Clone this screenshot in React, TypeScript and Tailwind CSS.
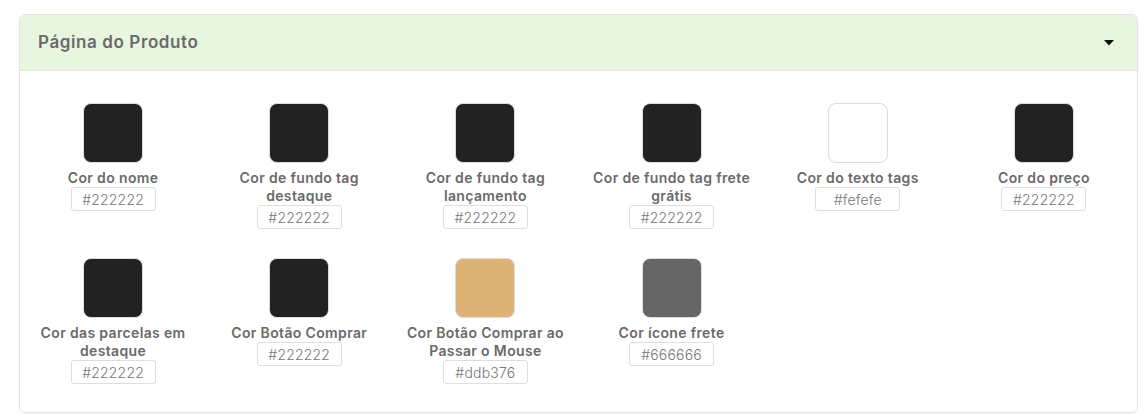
import { useState } from "react";

type ColorOption = {
  label: string;
  value: string;
};

const options: ColorOption[] = [
  { label: "Cor do nome", value: "#222222" },
  { label: "Cor de fundo tag destaque", value: "#222222" },
  { label: "Cor de fundo tag lançamento", value: "#222222" },
  { label: "Cor de fundo tag frete grátis", value: "#222222" },
  { label: "Cor do texto tags", value: "#fefefe" },
  { label: "Cor do preço", value: "#222222" },
  { label: "Cor das parcelas em destaque", value: "#222222" },
  { label: "Cor Botão Comprar", value: "#222222" },
  { label: "Cor Botão Comprar ao Passar o Mouse", value: "#ddb376" },
  { label: "Cor ícone frete", value: "#666666" },
];

function ColorField({ option }: { option: ColorOption }) {
  return (
    <div className="flex flex-col items-center px-[10px] text-center">
      {/* swatch colour comes from data */}
      <div
        className="h-[60px] w-[60px] rounded-[8px] border border-[#dcdcdc]"
        style={{ backgroundColor: option.value }}
      />
      <span className="mt-[6px] text-[14px] leading-[18px] font-semibold tracking-[0.35px] text-[#6a6a6a]">
        {option.label}
      </span>
      <div className="flex h-[24px] w-[85px] items-center justify-center rounded-[3px] border border-[#dedede] text-[14px] font-light tracking-[0.2px] text-[#777]">
        {option.value}
      </div>
    </div>
  );
}

export default function App() {
  const [open, setOpen] = useState(true);

  return (
    <div className="min-h-[420px] bg-white pt-[14px] pl-[19px]" style={{ fontFamily: "Inter, 'Open Sans', sans-serif" }}>
      <div className="w-[1119px] overflow-hidden rounded-[6px] border border-[#e4e4e4] shadow-[0_1px_2px_rgba(0,0,0,0.06)]">
        {/* Header */}
        <button
          onClick={() => setOpen(!open)}
          className="flex h-[56px] w-full items-center justify-between border-b border-[#e2e8dc] bg-[#e8f5df] pr-[23px] pl-[18px]"
        >
          <span className="text-[17px] font-semibold tracking-[0.6px] text-[#6a6a6a]">Página do Produto</span>
          <svg width="10" height="6" viewBox="0 0 10 6">
            <path d="M0 0 L10 0 L5 5.5 Z" fill="#111" />
          </svg>
        </button>

        {/* Body */}
        {open && (
          <div className="grid grid-cols-6 gap-y-[29px] bg-white pt-[32px] pb-[28px]">
            {options.map((o) => (
              <ColorField key={o.label} option={o} />
            ))}
          </div>
        )}
      </div>
    </div>
  );
}
